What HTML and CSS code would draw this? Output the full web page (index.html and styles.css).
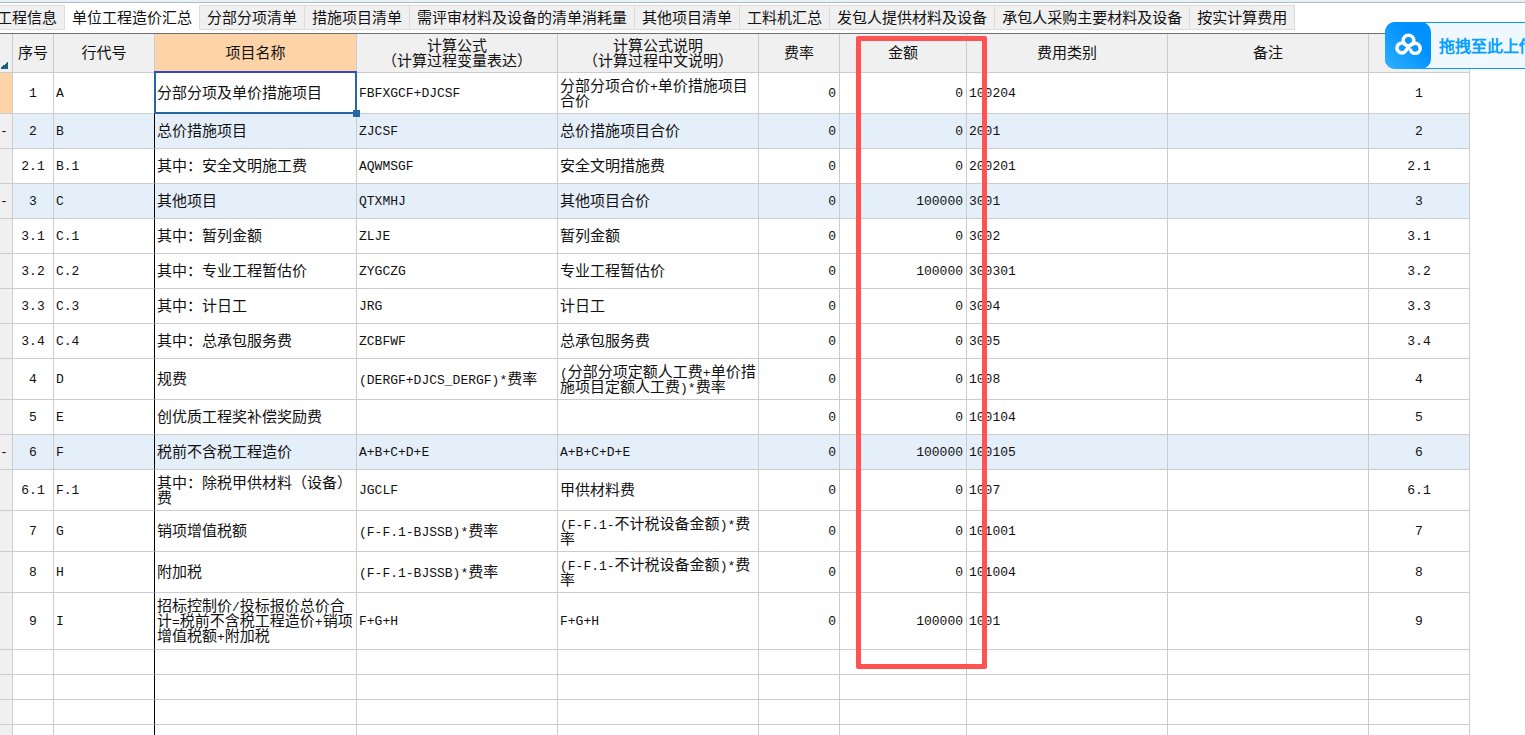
FILE: index.html
```html
<!DOCTYPE html>
<html lang="zh-CN">
<head>
  <meta charset="UTF-8" />
  <meta name="viewport" content="width=device-width, initial-scale=1.0"/>
  <title>单位工程造价汇总</title>
  <link rel="stylesheet" href="styles.css">
</head>
<body>

  <div class="top-strip"></div>

  <div class="tabs" role="tablist">
    <button class="tab" role="tab">工程信息</button>
    <button class="tab active" role="tab" aria-selected="true">单位工程造价汇总</button>
    <button class="tab" role="tab">分部分项清单</button>
    <button class="tab" role="tab">措施项目清单</button>
    <button class="tab" role="tab">需评审材料及设备的清单消耗量</button>
    <button class="tab" role="tab">其他项目清单</button>
    <button class="tab" role="tab">工料机汇总</button>
    <button class="tab" role="tab">发包人提供材料及设备</button>
    <button class="tab" role="tab">承包人采购主要材料及设备</button>
    <button class="tab" role="tab">按实计算费用</button>
  </div>

  <div class="sheet">
    <table class="grid">
      <colgroup>
        <col class="c-mark"><col class="c-no"><col class="c-code"><col class="c-name"><col class="c-text"><col class="c-text">
        <col class="c-rate"><col class="c-amount"><col class="c-text"><col class="c-text"><col class="c-last">
      </colgroup>
      <thead>
        <tr>
          <th class="corner"></th>
          <th>序号</th>
          <th>行代号</th>
          <th class="current">项目名称</th>
          <th>计算公式<br>（计算过程变量表达）</th>
          <th>计算公式说明<br>（计算过程中文说明）</th>
          <th>费率</th>
          <th>金额</th>
          <th>费用类别</th>
          <th>备注</th>
          <th></th>
        </tr>
      </thead>
      <tbody>
        <tr class="two-lines">
          <td class="mark current"></td><td class="no">1</td><td class="code">A</td>
          <td class="name selected">分部分项及单价措施项目<span class="handle"></span></td><td class="code">FBFXGCF+DJCSF</td><td>分部分项合价<span class="code">+</span>单价措施项目合价</td>
          <td class="num">0</td><td class="num">0</td><td class="code">100204</td><td></td><td class="no">1</td>
        </tr>
        <tr class="group">
          <td class="mark">-</td><td class="no">2</td><td class="code">B</td>
          <td class="name">总价措施项目</td><td class="code">ZJCSF</td><td>总价措施项目合价</td>
          <td class="num">0</td><td class="num">0</td><td class="code">2001</td><td></td><td class="no">2</td>
        </tr>
        <tr>
          <td class="mark"></td><td class="no">2.1</td><td class="code">B.1</td>
          <td class="name">其中：安全文明施工费</td><td class="code">AQWMSGF</td><td>安全文明措施费</td>
          <td class="num">0</td><td class="num">0</td><td class="code">200201</td><td></td><td class="no">2.1</td>
        </tr>
        <tr class="group">
          <td class="mark">-</td><td class="no">3</td><td class="code">C</td>
          <td class="name">其他项目</td><td class="code">QTXMHJ</td><td>其他项目合价</td>
          <td class="num">0</td><td class="num">100000</td><td class="code">3001</td><td></td><td class="no">3</td>
        </tr>
        <tr>
          <td class="mark"></td><td class="no">3.1</td><td class="code">C.1</td>
          <td class="name">其中：暂列金额</td><td class="code">ZLJE</td><td>暂列金额</td>
          <td class="num">0</td><td class="num">0</td><td class="code">3002</td><td></td><td class="no">3.1</td>
        </tr>
        <tr>
          <td class="mark"></td><td class="no">3.2</td><td class="code">C.2</td>
          <td class="name">其中：专业工程暂估价</td><td class="code">ZYGCZG</td><td>专业工程暂估价</td>
          <td class="num">0</td><td class="num">100000</td><td class="code">300301</td><td></td><td class="no">3.2</td>
        </tr>
        <tr>
          <td class="mark"></td><td class="no">3.3</td><td class="code">C.3</td>
          <td class="name">其中：计日工</td><td class="code">JRG</td><td>计日工</td>
          <td class="num">0</td><td class="num">0</td><td class="code">3004</td><td></td><td class="no">3.3</td>
        </tr>
        <tr>
          <td class="mark"></td><td class="no">3.4</td><td class="code">C.4</td>
          <td class="name">其中：总承包服务费</td><td class="code">ZCBFWF</td><td>总承包服务费</td>
          <td class="num">0</td><td class="num">0</td><td class="code">3005</td><td></td><td class="no">3.4</td>
        </tr>
        <tr class="two-lines">
          <td class="mark"></td><td class="no">4</td><td class="code">D</td>
          <td class="name">规费</td><td><span class="code">(DERGF+DJCS_DERGF)*</span>费率</td><td><span class="code">(</span>分部分项定额人工费<span class="code">+</span>单价措施项目定额人工费<span class="code">)*</span>费率</td>
          <td class="num">0</td><td class="num">0</td><td class="code">1008</td><td></td><td class="no">4</td>
        </tr>
        <tr>
          <td class="mark"></td><td class="no">5</td><td class="code">E</td>
          <td class="name">创优质工程奖补偿奖励费</td><td></td><td></td>
          <td class="num">0</td><td class="num">0</td><td class="code">100104</td><td></td><td class="no">5</td>
        </tr>
        <tr class="group">
          <td class="mark">-</td><td class="no">6</td><td class="code">F</td>
          <td class="name">税前不含税工程造价</td><td class="code">A+B+C+D+E</td><td class="code">A+B+C+D+E</td>
          <td class="num">0</td><td class="num">100000</td><td class="code">100105</td><td></td><td class="no">6</td>
        </tr>
        <tr class="two-lines">
          <td class="mark"></td><td class="no">6.1</td><td class="code">F.1</td>
          <td class="name">其中：除税甲供材料（设备）费</td><td class="code">JGCLF</td><td>甲供材料费</td>
          <td class="num">0</td><td class="num">0</td><td class="code">1007</td><td></td><td class="no">6.1</td>
        </tr>
        <tr class="two-lines">
          <td class="mark"></td><td class="no">7</td><td class="code">G</td>
          <td class="name">销项增值税额</td><td><span class="code">(F-F.1-BJSSB)*</span>费率</td><td><span class="code">(F-F.1-</span>不计税设备金额<span class="code">)*</span>费率</td>
          <td class="num">0</td><td class="num">0</td><td class="code">101001</td><td></td><td class="no">7</td>
        </tr>
        <tr class="two-lines">
          <td class="mark"></td><td class="no">8</td><td class="code">H</td>
          <td class="name">附加税</td><td><span class="code">(F-F.1-BJSSB)*</span>费率</td><td><span class="code">(F-F.1-</span>不计税设备金额<span class="code">)*</span>费率</td>
          <td class="num">0</td><td class="num">0</td><td class="code">101004</td><td></td><td class="no">8</td>
        </tr>
        <tr class="three-lines">
          <td class="mark"></td><td class="no">9</td><td class="code">I</td>
          <td class="name">招标控制价<span class="code">/</span>投标报价总价合计<span class="code">=</span>税前不含税工程造价<span class="code">+</span>销项增值税额<span class="code">+</span>附加税</td><td class="code">F+G+H</td><td class="code">F+G+H</td>
          <td class="num">0</td><td class="num">100000</td><td class="code">1001</td><td></td><td class="no">9</td>
        </tr>
        <tr class="empty"><td class="mark"></td><td></td><td></td><td class="name"></td><td></td><td></td><td></td><td></td><td></td><td></td><td></td></tr>
        <tr class="empty"><td class="mark"></td><td></td><td></td><td class="name"></td><td></td><td></td><td></td><td></td><td></td><td></td><td></td></tr>
        <tr class="empty"><td class="mark"></td><td></td><td></td><td class="name"></td><td></td><td></td><td></td><td></td><td></td><td></td><td></td></tr>
        <tr class="empty"><td class="mark"></td><td></td><td></td><td class="name"></td><td></td><td></td><td></td><td></td><td></td><td></td><td></td></tr>
      </tbody>
    </table>

    <div class="highlight"></div>
  </div>

  <button class="upload">
    <span class="upload-icon">
      <svg viewBox="0 0 46 47" width="46" height="47" fill="none" stroke="#fff" stroke-width="3.500" stroke-linecap="round">
        <circle cx="23.500" cy="18.500" r="5.300"/>
        <path d="M25.500 28 A5 5 0 1 0 29 21.500 C26 21.500 24.500 23.500 23 25.500 C21.500 28 20 31 17 31 A5 5 0 1 1 20.500 22.500"/>
      </svg>
    </span>
    <span class="upload-text">拖拽至此上传</span>
  </button>

</body>
</html>
```
FILE: styles.css
```css
* { margin: 0; padding: 0; box-sizing: border-box; }
body {
  height: 100vh;
  overflow: hidden;
  position: relative;
  display: flex;
  flex-direction: column;
  background: #fff;
  color: #111;
  font-family: "Noto Sans CJK SC", sans-serif;
  font-size: 15px;
}
.top-strip {
  flex: none;
  height: 3px;
  background: #e4f1f8;
  border-bottom: 1px solid #b4bcc0;
}

/* tabs */
.tabs {
  flex: none;
  display: flex;
  height: 30px;
  padding-top: 2px;
  margin-left: -10px;
}
.tab {
  flex: none;
  height: 25px;
  padding: 0 7px;
  border: 1px solid #dcdcdc;
  border-left: none;
  background: #f0f0f0;
  color: #111;
  font-family: inherit;
  font-size: 15px;
  line-height: 20px;
  padding-bottom: 2px;
  white-space: nowrap;
}
.tab.active {
  background: #fff;
  border-color: #fff #dcdcdc #fff #fff;
}

/* grid */
.sheet {
  flex: 1;
  position: relative;
}
.grid {
  table-layout: fixed;
  width: 1470px;
  border-collapse: separate;
  border-spacing: 0;
  border-top: 1px solid #6e6e6e;
}
.c-mark { width: 13px; }
.c-no { width: 41px; }
.c-code { width: 101px; }
.c-name { width: 202px; }
.c-text { width: 201px; }
.c-rate { width: 81px; }
.c-amount { width: 127px; }
.c-last { width: 101px; }
.grid th,
.grid td {
  border-right: 1px solid #ccc;
  border-bottom: 1px solid #ccc;
  line-height: 15px;
  vertical-align: middle;
}
.grid th {
  height: 39px;
  padding-bottom: 3px;
  background: #f0f0f0;
  font-weight: normal;
  text-align: center;
}
.grid td {
  height: 35px;
  padding-left: 2px;
  padding-bottom: 3px;
  text-align: left;
  word-break: break-all;
}
.grid .two-lines td { height: 41px; }
.grid .three-lines td { height: 57px; }
.grid .empty td { height: 25px; }
.grid .group td { background: #e5effa; }
.grid .code,
.grid .no,
.grid .num {
  padding-bottom: 0;
  font-family: "Liberation Mono", monospace;
  font-size: 13px;
}
.grid span.code { line-height: 0; }
.grid .no {
  padding: 0;
  text-align: center;
}
.grid .num {
  padding-right: 3px;
  text-align: right;
}
.grid .mark,
.grid .group .mark {
  padding: 0;
  background: #f0f0f0;
  font-family: "Liberation Mono", monospace;
  font-size: 13px;
}
.grid .current,
.grid .mark.current {
  background: #ffd3a8;
}
.grid .corner {
  background: linear-gradient(135deg, transparent 50%, #1f5f80 50%) 0 27px / 8px 8px no-repeat #f0f0f0;
}
/* frozen column line */
.grid td:nth-child(3) {
  border-right-color: #000;
}
.grid .selected {
  position: relative;
}
.grid .selected::before {
  content: "";
  position: absolute;
  inset: -2px -1px -1px -1px;
  border: 2px solid #2468a8;
  border-top-color: #2c4cc0;
}
.handle {
  position: absolute;
  right: -4px;
  bottom: -4px;
  width: 7px;
  height: 7px;
  background: #2468a8;
}

/* red frame over the amount column */
.highlight {
  position: absolute;
  left: 856px;
  top: 3px;
  width: 131px;
  height: 633px;
  border: 5px solid #ff5252;
  border-radius: 2px;
}

/* floating upload button */
.upload {
  position: absolute;
  top: 22px;
  right: -24px;
  width: 164px;
  height: 47px;
  display: flex;
  align-items: center;
  gap: 8px;
  border: none;
  border-radius: 10px;
  background: #f0f8ff;
  box-shadow: inset 0 0 0 1px #0a96ff;
  color: #06a0ff;
  cursor: pointer;
}
.upload-icon {
  flex: none;
  width: 46px;
  height: 47px;
  border-radius: 10px;
  background: linear-gradient(45deg, #2fb0ff, #0090ff 65%);
}
.upload-icon svg { display: block; }
.upload-text {
  padding-bottom: 2px;
  font-size: 16px;
  font-weight: bold;
  white-space: nowrap;
}
```
